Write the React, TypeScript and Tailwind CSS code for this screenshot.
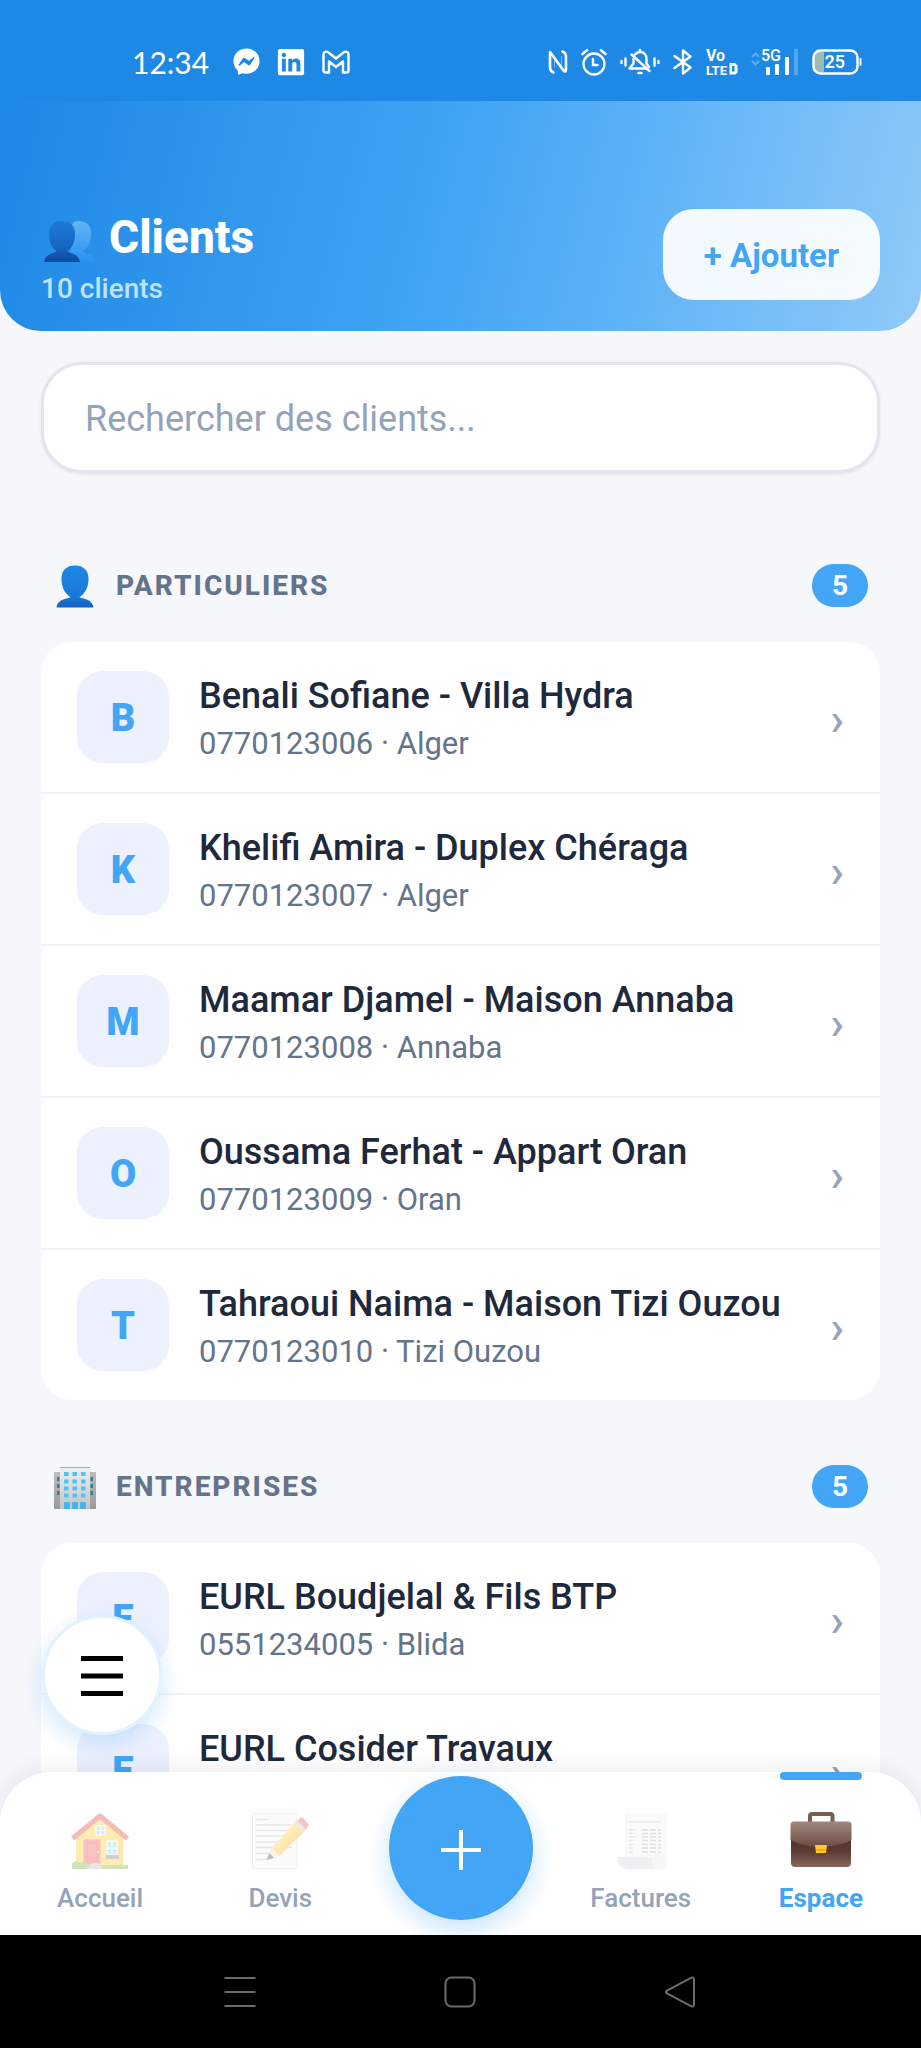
import React from "react";
import { FaFacebookMessenger, FaLinkedin } from "react-icons/fa";

type Client = {
  name: string;
  details: string;
};

const particuliers: Client[] = [
  { name: "Benali Sofiane - Villa Hydra", details: "0770123006 · Alger" },
  { name: "Khelifi Amira - Duplex Chéraga", details: "0770123007 · Alger" },
  { name: "Maamar Djamel - Maison Annaba", details: "0770123008 · Annaba" },
  { name: "Oussama Ferhat - Appart Oran", details: "0770123009 · Oran" },
  { name: "Tahraoui Naima - Maison Tizi Ouzou", details: "0770123010 · Tizi Ouzou" },
];

const entreprises: Client[] = [
  { name: "EURL Boudjelal & Fils BTP", details: "0551234005 · Blida" },
  { name: "EURL Cosider Travaux", details: "" },
];

const GmailIcon = () => (
  <svg width="28" height="24" viewBox="0 0 28 24" fill="none" stroke="white" strokeWidth="2.400" strokeLinejoin="round">
    <path d="M1.500 4.500C1.500 1.500 4.500 1 6.500 2.500L14 8.500L21.500 2.500C23.500 1 26.500 1.500 26.500 4.500V20.500C26.500 21.800 25.800 22.500 24.500 22.500H21V11.500L14 17L7 11.500V22.500H3.500C2.200 22.500 1.500 21.800 1.500 20.500Z" />
  </svg>
);

const NfcIcon = () => (
  <svg width="20" height="26" viewBox="0 0 20 26" fill="none" stroke="white" strokeWidth="2.600" strokeLinecap="round" strokeLinejoin="round">
    <path d="M5.500 23.500C3 22.500 2 21 2 18V3L15.500 21.500C17.500 23.500 18 22 18 20V8C18 5 17 3.500 14.500 2.500" />
    <path d="M6.500 8V18M13.500 7.500V18" strokeWidth="1" opacity="0.400" />
  </svg>
);

const AlarmIcon = () => (
  <svg width="26" height="28" viewBox="0 0 26 28" fill="none" stroke="white" strokeWidth="2.300" strokeLinecap="round">
    <circle cx="13" cy="16" r="10.500" />
    <path d="M12 11V17H16.500" strokeWidth="2.400" />
    <path d="M1.500 6L6 2.200M24.500 6L20 2.200" strokeWidth="2.600" />
  </svg>
);

const SilentBellIcon = () => (
  <svg width="40" height="28" viewBox="0 0 40 28" fill="none" stroke="white" strokeWidth="2.400" strokeLinecap="round" strokeLinejoin="round">
    <path d="M15 6.500C16.500 4.500 18 4 20 4C24 4 26.500 7 26.500 11V15.500L29 19" />
    <path d="M13.500 11V15.500L9.500 20.500H26.500" />
    <path d="M11.500 6.500L29.500 23" />
    <path d="M20 2V4M18.500 25H21.500" strokeWidth="2.600" />
    <path d="M1.500 13V15M5.500 10.500V17.500M34.500 10.500V17.500M38.500 13V15" />
  </svg>
);

const BluetoothIcon = () => (
  <svg width="20" height="28" viewBox="0 0 20 28" fill="none" stroke="white" strokeWidth="2.400" strokeLinecap="round" strokeLinejoin="round">
    <path d="M1.500 8L17.500 19.500L10 25.500V2.500L17.500 8.500L1.500 20" />
  </svg>
);

const VolteIcon = () => (
  <svg width="32" height="40" viewBox="0 -6 32 40" fill="white" fontFamily="Roboto, sans-serif" fontWeight="700">
    <text x="0" y="13" fontSize="16">Vo</text>
    <text x="0" y="26.500" fontSize="13">LTE</text>
    <path fillRule="evenodd" d="M23.500 15H29L31.500 17.500V24.500L29.500 26.500H23.500ZM26 18V23.500H28.500V18Z" />
  </svg>
);

const SignalIcon = () => (
  <svg width="48" height="40" viewBox="0 -6 48 40" fill="white">
    <path d="M1 9L4.500 5.500L8 9M1 13L4.500 16.500L8 13" fill="none" stroke="white" strokeWidth="2" opacity="0.300" />
    <text x="10" y="13" fontSize="16" fontWeight="500" fontFamily="Roboto, sans-serif">5G</text>
    <rect x="15" y="19" width="4" height="8" rx="1" />
    <rect x="24" y="16" width="4" height="11" rx="1" />
    <rect x="34" y="9" width="4" height="18" rx="1" />
    <rect x="43" y="1" width="4" height="26" rx="1" opacity="0.250" />
  </svg>
);

const BatteryIcon = () => (
  <svg width="50" height="28" viewBox="0 0 50 28">
    <path d="M12 3.500H8C4 3.500 2 5.500 2 9V18C2 21.500 4 24 8 24H12Z" fill="#9dbbb0" />
    <rect x="1.500" y="2.500" width="44" height="23" rx="7" fill="none" stroke="white" strokeWidth="2.400" />
    <rect x="47.500" y="10" width="2" height="8" rx="1" fill="white" />
    <text x="12.500" y="20" fontSize="18" fontWeight="600" fontFamily="Roboto, sans-serif" fill="white">25</text>
  </svg>
);

const PeopleIcon = () => (
  <svg width="54" height="44" viewBox="0 0 54 44">
    <defs>
      <linearGradient id="people-back" x1="0" y1="0" x2="0" y2="1">
        <stop offset="0" stopColor="#64b5f6" />
        <stop offset="1" stopColor="#2593ee" />
      </linearGradient>
      <linearGradient id="people-front" x1="0" y1="0" x2="0" y2="1">
        <stop offset="0" stopColor="#1b7bd6" />
        <stop offset="0.600" stopColor="#1668c4" />
        <stop offset="1" stopColor="#0d47a1" />
      </linearGradient>
    </defs>
    <path fill="url(#people-back)" d="M35 1C43 1 49 5 48 14C48 22 45 28 40 31C39 34 51 33 53 42H28V6C30 2 32 1 35 1Z" />
    <path fill="url(#people-front)" d="M19 1C27 1 32 5 32 14C32 22 29 28 24.500 31C24 33 35 32 37 42H1C3 32 14 33 13.500 31C9 28 6 22 6 14C6 5 11 1 19 1Z" />
  </svg>
);

const PersonIcon = () => (
  <svg width="44" height="44" viewBox="0 0 44 44">
    <defs>
      <linearGradient id="person-fill" x1="0" y1="0" x2="0" y2="1">
        <stop offset="0" stopColor="#1e88e5" />
        <stop offset="0.700" stopColor="#1a79da" />
        <stop offset="1" stopColor="#1560bd" />
      </linearGradient>
    </defs>
    <path fill="url(#person-fill)" d="M22 1.500C30.500 1.500 35.500 6 35.500 15C35.500 23 32 30 26.500 33C26.500 35 39 33.500 40.500 43.500H3.500C5 33.500 17.500 35 17.500 33C12 30 8.500 23 8.500 15C8.500 6 13.500 1.500 22 1.500Z" />
  </svg>
);

const BuildingIcon = () => (
  <svg width="44" height="44" viewBox="0 0 44 44">
    <defs>
      <linearGradient id="tower-side" x1="0" y1="0" x2="0" y2="1">
        <stop offset="0" stopColor="#bdbdbd" />
        <stop offset="1" stopColor="#9a9a9a" />
      </linearGradient>
      <linearGradient id="tower-front" x1="0" y1="0" x2="0" y2="1">
        <stop offset="0" stopColor="#f0f0f0" />
        <stop offset="1" stopColor="#c4c4c4" />
      </linearGradient>
    </defs>
    <path fill="url(#tower-side)" d="M1 7H43V44H1Z" />
    <path fill="#2f7f9d" d="M4 12H6.500V16H4ZM4 19H6.500V23H4ZM4 26H6.500V30H4ZM37.500 12H40V16H37.500ZM37.500 19H40V23H37.500ZM37.500 26H40V30H37.500Z" />
    <rect x="7" y="2" width="30" height="42" fill="url(#tower-front)" />
    <rect x="7" y="2" width="30" height="1" fill="#aaa" />
    <path fill="#4fc3f7" d="M11 7H15.500V11H11ZM19.500 7H24V11H19.500ZM28 7H32.500V11H28ZM11 14.500H15.500V18.500H11ZM19.500 14.500H24V18.500H19.500ZM28 14.500H32.500V18.500H28ZM11 21.500H15.500V25.500H11ZM19.500 21.500H24V25.500H19.500ZM28 21.500H32.500V25.500H28ZM11 28.500H15.500V32.500H11ZM19.500 28.500H24V32.500H19.500ZM28 28.500H32.500V32.500H28Z" />
    <path fill="#45b6ec" d="M11 37H17V44H11ZM19 37H25V44H19ZM27 37H33V44H27Z" />
  </svg>
);

const HouseIcon = () => (
  <svg width="58" height="58" viewBox="0 0 58 58" className="opacity-35">
    <path fill="#ffca28" d="M5 24L29 6L52 24V56H5Z" />
    <path fill="#f2a600" d="M48 24H52V56H48Z" opacity="0.400" />
    <path fill="none" stroke="#e0403a" strokeWidth="5" strokeLinejoin="round" d="M1.500 26.500L29 4L56.500 26.500" />
    <rect x="12.500" y="27.500" width="17" height="25" fill="#ef5350" />
    <path fill="none" stroke="#c62828" strokeWidth="1" d="M16 31H26V52H16Z" opacity="0.500" />
    <circle cx="27" cy="40" r="1" fill="#fff176" />
    <rect x="25" y="14" width="9" height="9" fill="#81d4fa" stroke="white" />
    <path stroke="white" d="M29.500 14V23M25 18.500H34" />
    <rect x="36" y="29" width="10" height="14" fill="#81d4fa" stroke="white" />
    <path stroke="white" d="M41 29V43M36 36H46" />
    <rect x="35" y="43" width="13" height="4" fill="#8d6e63" />
    <path fill="#7cb342" d="M1 57V52C3 48 7 49 9 51C12 49 16 50 18 53H57V57Z" />
    <path fill="#bdbdbd" d="M16 57C17 52 21 51 24 51C28 51 31 53 32 57Z" />
  </svg>
);

const MemoIcon = () => (
  <svg width="58" height="58" viewBox="0 0 58 58" className="opacity-35">
    <rect x="1.500" y="1.500" width="44" height="55" rx="2" fill="#f5f5f5" stroke="#d0d0d0" />
    <path stroke="#bdbdbd" strokeWidth="1.500" d="M5 7.500H17M5 13H41M5 18.500H41M5 24H41M5 30H41M5 35.500H41M5 41.500H28M5 47.500H18" />
    <path fill="#ffca28" d="M21 36L44 11L53 20L28 44Z" />
    <path fill="#f9a825" d="M25 40L48 15L53 20L28 44Z" opacity="0.500" />
    <path fill="#bdbdbd" d="M44 11L47 8L56 17L53 20Z" />
    <path fill="#ef5350" d="M46.500 8.500L49 6C50 5 51 5 52 6L57 11.500C58 12.500 58 13.500 57 14.500L55 17Z" />
    <path fill="#ffe0b2" d="M21 36L28 44L16 48Z" />
    <path fill="#37474f" d="M18.500 41L23 46L15.500 48Z" />
  </svg>
);

const ReceiptIcon = () => (
  <svg width="58" height="58" viewBox="0 0 58 58" className="opacity-35">
    <path fill="#f3f3f3" stroke="#dcdcdc" strokeDasharray="2 1" d="M14 2H54V50C54 54 52 57 48 57H14Z" />
    <path stroke="#bdbdbd" strokeWidth="1.200" d="M17 10H49" />
    <path stroke="#bdbdbd" strokeWidth="1.500" strokeDasharray="4 1" d="M17 18H24M17 21.500H23M17 25H24M17 28.500H21M17 32.500H23M17 36H21M17 40H22" />
    <path stroke="#a8a8a8" strokeWidth="1.500" strokeDasharray="6 2" d="M30 18H49M30 21.500H49M30 25H49M30 28.500H49M30 32.500H49M30 36H49M30 40H49" />
    <path fill="#cfd8dc" d="M6 45H40C40 50 41 55 46 57H19C10 57 5 54 6 45Z" />
    <path fill="#e8e8e8" d="M40 45C40 51 42 57 47 57C52 57 54 54 54 48V43C50 40 44 42 40 45Z" />
  </svg>
);

const BriefcaseIcon = () => (
  <svg width="62" height="58" viewBox="0 2 62 58">
    <defs>
      <linearGradient id="case-flap" x1="0" y1="0" x2="0" y2="1">
        <stop offset="0" stopColor="#a1887f" />
        <stop offset="1" stopColor="#6d4c41" />
      </linearGradient>
      <linearGradient id="case-body" x1="0" y1="0" x2="0" y2="1">
        <stop offset="0" stopColor="#4e342e" />
        <stop offset="0.500" stopColor="#5a3a33" />
        <stop offset="1" stopColor="#8a6658" />
      </linearGradient>
    </defs>
    <path fill="none" stroke="#795b50" strokeWidth="4" d="M20 14V6C20 4.500 21 4 22.500 4H40C41.500 4 42.500 4.500 42.500 6V14" />
    <path fill="url(#case-body)" d="M1 25H61V53C61 55.500 59.500 57 57 57H5C2.500 57 1 55.500 1 53Z" />
    <path fill="url(#case-flap)" d="M4 11.500H58C60.500 11.500 61.500 13 61.500 15V30C50 35.500 40 37 31 37C22 37 12 35.500 0.500 30V15C0.500 13 1.500 11.500 4 11.500Z" />
    <path fill="#ffc928" d="M25 35H37L36 43H26Z" />
    <path fill="#f3ad1c" d="M26.500 39H35.500V41H26.500Z" />
  </svg>
);

const StatusBar = () => (
  <div className="flex h-[101px] shrink-0 items-center justify-between bg-[#1e88e5] pt-[22px] pr-[59px] pl-[132px] text-white">
    <div className="flex items-center">
      <span className="font-[Lato,sans-serif] text-[30px] leading-[32px]">12:34</span>
      <div className="ml-[24px] flex items-center gap-[16px]">
        <FaFacebookMessenger size={27} />
        <FaLinkedin size={30} />
        <GmailIcon />
      </div>
    </div>
    <div className="flex items-center gap-[13px]">
      <NfcIcon />
      <AlarmIcon />
      <SilentBellIcon />
      <BluetoothIcon />
      <VolteIcon />
      <SignalIcon />
      <BatteryIcon />
    </div>
  </div>
);

const Header = () => (
  <header className="flex shrink-0 items-start justify-between rounded-b-[41px] bg-[linear-gradient(104deg,#1e88e5_0%,#42a5f5_50%,#90caf9_100%)] px-[41px] pt-[108px] pb-[26px]">
    <div>
      <h1 className="flex items-center gap-[12px] text-[46px] leading-[56px] font-extrabold text-white">
        <span className="pt-[10px] pl-[2px]">
          <PeopleIcon />
        </span>
        Clients
      </h1>
      <p className="mt-[7px] text-[28px] leading-[33px] font-medium text-[#bfe3fd]">10 clients</p>
    </div>
    <button className="rounded-[31px] bg-white/92 px-[41px] pt-[27px] pb-[25px] text-[33px] leading-[39px] font-bold text-[#42a5f5]">
      + Ajouter
    </button>
  </header>
);

const ClientRow = ({ client }: { client: Client }) => (
  <li className="border-b-2 border-[#f1f3f6] last:border-b-0">
    <a href="#" className="flex items-center px-[36px] py-[29px]">
      <span className="flex size-[92px] shrink-0 items-center justify-center rounded-[26px] bg-[#edf1fe] pt-[2px] text-[38px] font-black text-[#42a5f5]">
        {client.name[0]}
      </span>
      <span className="ml-[30px] flex min-w-0 flex-1 flex-col gap-2 pt-[2px]">
        <span className="truncate text-[36px] leading-[42px] font-medium text-[#1e293b]">{client.name}</span>
        <span className="h-[37px] text-[31px] leading-[37px] text-[#64748b]">{client.details}</span>
      </span>
      <span className="pt-[3px] text-[46px] leading-[54px] font-medium text-[#94a3b8]">›</span>
    </a>
  </li>
);

type ClientSectionProps = {
  icon: React.ReactNode;
  title: string;
  count: number;
  clients: Client[];
};

const ClientSection = ({ icon, title, count, clients }: ClientSectionProps) => (
  <section>
    <div className="flex h-[43px] items-center px-[12px]">
      {icon}
      <h2 className="ml-[19px] flex-1 text-[28px] leading-[33px] font-extrabold tracking-[2px] text-[#64748b] uppercase">
        {title}
      </h2>
      <span className="rounded-full bg-[#42a5f5] px-[20px] py-[5px] text-[28px] leading-[33px] font-bold text-white">
        {count}
      </span>
    </div>
    <ul className="mt-[35px] overflow-hidden rounded-[31px] bg-white">
      {clients.map((client) => (
        <ClientRow key={client.name} client={client} />
      ))}
    </ul>
  </section>
);

type TabProps = {
  icon: React.ReactNode;
  label: string;
  active?: boolean;
};

const Tab = ({ icon, label, active }: TabProps) => (
  <a
    href="#"
    className={
      active
        ? "relative flex flex-1 flex-col items-center pt-[40px] text-[26px] leading-[31px] font-bold text-[#42a5f5]"
        : "relative flex flex-1 flex-col items-center pt-[40px] text-[26px] leading-[31px] font-medium text-[#94a3b8]"
    }
  >
    {active && <span className="absolute top-0 h-2 w-[82px] rounded-full bg-[#42a5f5]" />}
    {icon}
    <span className="mt-[13px]">{label}</span>
  </a>
);

const BottomNav = () => (
  <nav className="relative -mt-[51px] flex h-[163px] shrink-0 rounded-t-[51px] bg-white px-[10px] shadow-[0_-4px_24px_rgba(30,41,59,0.08)]">
    <Tab icon={<HouseIcon />} label="Accueil" />
    <Tab icon={<MemoIcon />} label="Devis" />
    <div className="flex flex-1 justify-center pt-[4px]">
      <button
        aria-label="Créer"
        className="flex size-[144px] shrink-0 items-center justify-center rounded-full bg-[#42a5f5] pt-[3px] shadow-[0_10px_26px_rgba(66,165,245,0.3)]"
      >
        <svg width="40" height="40" viewBox="0 0 40 40" stroke="white" strokeWidth="4">
          <path d="M20 0V40M0 20H40" />
        </svg>
      </button>
    </div>
    <Tab icon={<ReceiptIcon />} label="Factures" />
    <Tab icon={<BriefcaseIcon />} label="Espace" active />
  </nav>
);

const SystemBar = () => (
  <div className="relative flex h-[113px] shrink-0 items-center bg-black px-[130px]">
    <button aria-label="Applications récentes" className="flex flex-1 justify-center">
      <svg width="32" height="32" viewBox="0 0 32 32" fill="none" stroke="#6b6b6b" strokeWidth="2">
        <path d="M0.500 2H31.500M0.500 16H31.500M0.500 30H31.500" />
      </svg>
    </button>
    <button aria-label="Écran d'accueil" className="flex flex-1 justify-center">
      <svg width="32" height="32" viewBox="0 0 32 32" fill="none" stroke="#6b6b6b" strokeWidth="2">
        <rect x="1.500" y="1.500" width="29" height="29" rx="6" />
      </svg>
    </button>
    <button aria-label="Retour" className="flex flex-1 justify-center">
      <svg width="32" height="32" viewBox="0 0 32 32" fill="none" stroke="#6b6b6b" strokeWidth="2">
        <path d="M26 1.800C27.800 1 29 2 29 3.500V28.500C29 30 27.800 31 26 30.200L2 17.500C0.500 16.500 0.500 15.500 2 14.500Z" />
      </svg>
    </button>
  </div>
);

const App = () => {
  return (
    <div className="relative flex h-screen flex-col overflow-hidden bg-[#f5f7fb] font-[Roboto,sans-serif]">
      <StatusBar />
      <Header />

      <main className="min-h-0 flex-1 overflow-hidden px-[41px] pt-[31px]">
        <input
          type="search"
          aria-label="Rechercher des clients"
          placeholder="Rechercher des clients..."
          className="block h-[111px] w-full rounded-[41px] border-[3px] border-[#e2e6ec] bg-white px-[41px] pt-[2px] text-[36px] text-[#1e293b] shadow-[0_1px_3px_rgba(30,41,59,0.1)] placeholder:text-[#94a3b8]"
        />
        <div className="mt-[91px] flex flex-col gap-[65px]">
          <ClientSection icon={<PersonIcon />} title="Particuliers" count={5} clients={particuliers} />
          <ClientSection icon={<BuildingIcon />} title="Entreprises" count={5} clients={entreprises} />
        </div>
      </main>

      <BottomNav />
      <SystemBar />

      <button
        aria-label="Menu"
        className="absolute bottom-[313px] left-[42px] flex size-[120px] items-center justify-center rounded-full border-[3px] border-[#e3f2fd] bg-white pt-[2px] shadow-[0_8px_22px_rgba(66,165,245,0.25)]"
      >
        <svg width="42" height="42" viewBox="0 0 42 42" stroke="black" strokeWidth="5">
          <path d="M0 3.500H42M0 21H42M0 38.500H42" />
        </svg>
      </button>
    </div>
  );
};

export default App;
